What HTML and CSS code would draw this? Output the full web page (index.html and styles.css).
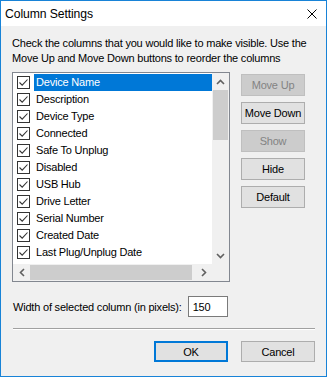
FILE: index.html
```html
<!DOCTYPE html>
<html lang="en">
<head>
    <meta charset="UTF-8">
    <title>Column Settings</title>
    <link rel="stylesheet" href="styles.css">
</head>
<body>
    <div class="window">
        <div class="titlebar">
            <span class="title">Column Settings</span>
            <svg class="close" width="10" height="10" viewBox="0 0 10 10">
                <path d="M0.5 0.5 L9.5 9.5 M9.5 0.5 L0.5 9.5" stroke="#000" stroke-width="1" fill="none"/>
            </svg>
        </div>

        <div class="content">
            <p class="intro">Check the columns that you would like to make visible. Use the<br>Move Up and Move Down buttons to reorder the columns</p>

            <div class="main">
                <div class="listbox">
                    <div class="list-area">
                        <div class="rows" id="rows"></div>
                        <div class="vscroll">
                            <div class="arrow">
                                <svg width="9" height="6" viewBox="0 0 9 6"><path d="M1 5 L4.5 1.5 L8 5" stroke="#606060" stroke-width="1.6" fill="none"/></svg>
                            </div>
                            <div class="vthumb"></div>
                            <div class="vtrack"></div>
                            <div class="arrow">
                                <svg width="9" height="6" viewBox="0 0 9 6"><path d="M1 1 L4.5 4.5 L8 1" stroke="#606060" stroke-width="1.6" fill="none"/></svg>
                            </div>
                        </div>
                    </div>
                    <div class="hscroll">
                        <div class="arrow">
                            <svg width="6" height="9" viewBox="0 0 6 9"><path d="M5 1 L1.5 4.5 L5 8" stroke="#606060" stroke-width="1.6" fill="none"/></svg>
                        </div>
                        <div class="hthumb"></div>
                        <div class="htrack"></div>
                        <div class="arrow">
                            <svg width="6" height="9" viewBox="0 0 6 9"><path d="M1 1 L4.5 4.5 L1 8" stroke="#606060" stroke-width="1.6" fill="none"/></svg>
                        </div>
                        <div class="corner"></div>
                    </div>
                </div>

                <div class="side-buttons">
                    <button class="btn" disabled>Move Up</button>
                    <button class="btn">Move Down</button>
                    <button class="btn" disabled>Show</button>
                    <button class="btn">Hide</button>
                    <button class="btn">Default</button>
                </div>
            </div>

            <div class="width-row">
                <label for="widthInput">Width of selected column (in pixels):</label>
                <input type="text" id="widthInput" value="150">
            </div>

            <div class="separator"></div>

            <div class="footer">
                <button class="btn wide default">OK</button>
                <button class="btn wide">Cancel</button>
            </div>
        </div>
    </div>

    <script>
        const columns = [
            'Device Name', 'Description', 'Device Type', 'Connected', 'Safe To Unplug',
            'Disabled', 'USB Hub', 'Drive Letter', 'Serial Number', 'Created Date',
            'Last Plug/Unplug Date'
        ];
        const rows = document.getElementById('rows');

        columns.forEach(function(name, i) {
            const row = document.createElement('div');
            row.className = 'row' + (i === 0 ? ' selected' : '');
            row.innerHTML =
                '<span class="check"><svg width="11" height="11" viewBox="0 0 11 11">' +
                '<path d="M1.5 5.5 L4.2 8.2 L9.5 2.5" stroke="#333" stroke-width="1.1" fill="none"/></svg></span>' +
                '<span class="label"></span>';
            row.querySelector('.label').textContent = name;
            rows.appendChild(row);
        });
    </script>
</body>
</html>
```

FILE: styles.css
```css
* {
    margin: 0;
    padding: 0;
    box-sizing: border-box;
}

body {
    font-family: "Liberation Sans", Arial, sans-serif;
    font-size: 11px;
    letter-spacing: -0.2px;
    color: #000;
    background: #f0f0f0;
}

.window {
    width: 327px;
    height: 377px;
    border: 1px solid #1883d7;
    background: #f0f0f0;
    display: flex;
    flex-direction: column;
    overflow: hidden;
}

.titlebar {
    height: 25px;
    background: #fff;
    display: flex;
    align-items: center;
    justify-content: space-between;
    padding: 0 9px 0 4px;
}

.title {
    font-size: 12.2px;
    letter-spacing: -0.1px;
}

.content {
    padding: 10px 11px 0 11px;
}

.intro {
    line-height: 15px;
    height: 30px;
    white-space: nowrap;
}

.main {
    display: flex;
    margin-top: 6px;
    gap: 11px;
}

.listbox {
    width: 218px;
    height: 210px;
    border: 1px solid #828790;
    background: #fff;
    display: flex;
    flex-direction: column;
}

.list-area {
    display: flex;
    flex: 1;
}

.rows {
    flex: 1;
    padding-top: 1px;
}

.row {
    height: 17px;
    display: flex;
    align-items: center;
    padding-left: 4px;
}

.check {
    width: 13px;
    height: 13px;
    border: 1px solid #333;
    background: #fff;
    display: flex;
    align-items: center;
    justify-content: center;
    margin-right: 4px;
}

.label {
    height: 17px;
    line-height: 17px;
    padding-left: 2px;
    flex: 1;
    white-space: nowrap;
}

.row.selected .label {
    background: #0078d7;
    color: #fff;
}

.vscroll {
    width: 17px;
    background: #f0f0f0;
    display: flex;
    flex-direction: column;
}

.vscroll .arrow {
    height: 17px;
    display: flex;
    align-items: center;
    justify-content: center;
}

.vthumb {
    height: 50px;
    margin: 0 1px;
    background: #cdcdcd;
}

.vtrack {
    flex: 1;
}

.hscroll {
    height: 17px;
    background: #f0f0f0;
    display: flex;
}

.hscroll .arrow {
    width: 17px;
    display: flex;
    align-items: center;
    justify-content: center;
}

.hthumb {
    width: 162px;
    margin: 1px 0;
    background: #cdcdcd;
}

.htrack {
    flex: 1;
}

.corner {
    width: 17px;
    background: #f0f0f0;
}

.side-buttons {
    display: flex;
    flex-direction: column;
    gap: 6px;
    padding-top: 2px;
}

.btn {
    font-family: "Liberation Sans", Arial, sans-serif;
    font-size: 11px;
    letter-spacing: -0.2px;
    width: 64px;
    height: 22px;
    padding: 0;
    white-space: nowrap;
    background: #e1e1e1;
    border: 1px solid #adadad;
    color: #000;
}

.btn:disabled {
    background: #cccccc;
    border-color: #bfbfbf;
    color: #838383;
}

.width-row {
    display: flex;
    align-items: center;
    gap: 6px;
    margin-top: 14px;
    margin-left: 1px;
}

#widthInput {
    width: 40px;
    height: 21px;
    border: 1px solid #7a7a7a;
    padding-left: 4px;
    font-family: "Liberation Sans", Arial, sans-serif;
    font-size: 11px;
    letter-spacing: -0.2px;
    outline: none;
}

.separator {
    margin: 11px 0 0 1px;
    height: 2px;
    border-top: 1px solid #a0a0a0;
    border-bottom: 1px solid #fff;
}

.footer {
    display: flex;
    justify-content: flex-end;
    gap: 13px;
    margin-top: 11px;
}

.btn.wide {
    width: 74px;
    height: 21px;
}

.btn.default {
    border: 2px solid #0078d7;
}
```
